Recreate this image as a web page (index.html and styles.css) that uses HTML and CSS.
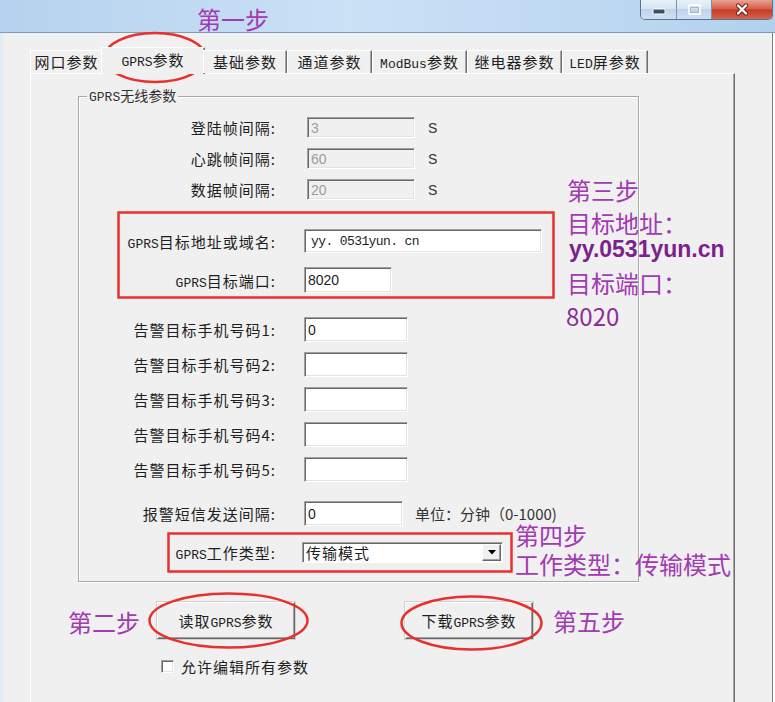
FILE: index.html
```html
<!DOCTYPE html>
<html lang="zh-CN">
<head>
    <meta charset="UTF-8">
    <meta name="viewport" content="width=device-width, initial-scale=1.0">
    <title>GPRS参数设置</title>
    <link rel="stylesheet" href="styles.css">
</head>
<body>
    <div class="titlebar">
        <div class="caption">
            <span class="cap-btn min">
                <svg width="14" height="7" viewBox="0 0 14 7"><rect x="1" y="1" width="12" height="5" rx="1.5" fill="#3a4e66" stroke="#fff"/></svg>
            </span>
            <span class="cap-btn max">
                <svg width="13" height="11" viewBox="0 0 13 11"><rect x="1" y="1" width="11" height="9" fill="none" stroke="#fff" stroke-width="1.6"/><rect x="2.5" y="3.5" width="8" height="5" fill="none" stroke="#a3b5ca"/></svg>
            </span>
            <span class="cap-btn close">
                <svg width="16" height="13" viewBox="0 0 16 13"><path d="M4 2.5 L12 10.5 M12 2.5 L4 10.5" stroke="#6b2016" stroke-width="4.2" stroke-linecap="round"/><path d="M4 2.5 L12 10.5 M12 2.5 L4 10.5" stroke="#fff" stroke-width="2.4" stroke-linecap="round"/></svg>
            </span>
        </div>
    </div>

    <div class="client">
        <div class="tabs">
            <div class="tab t1">网口参数</div>
            <div class="tab t2 active"><span class="en">GPRS</span>参数</div>
            <div class="tab t3">基础参数</div>
            <div class="tab t4">通道参数</div>
            <div class="tab t5"><span class="en">ModBus</span>参数</div>
            <div class="tab t6">继电器参数</div>
            <div class="tab t7"><span class="en">LED</span>屏参数</div>
        </div>

        <div class="panel">
            <fieldset class="group">
                <legend><span class="en">GPRS</span>无线参数</legend>

                <div class="sec intervals">
                    <div class="row">
                        <label>登陆帧间隔:</label>
                        <input class="field off short" value="3" readonly>
                        <span class="unit">S</span>
                    </div>
                    <div class="row">
                        <label>心跳帧间隔:</label>
                        <input class="field off short" value="60" readonly>
                        <span class="unit">S</span>
                    </div>
                    <div class="row">
                        <label>数据帧间隔:</label>
                        <input class="field off short" value="20" readonly>
                        <span class="unit">S</span>
                    </div>
                </div>

                <div class="sec target">
                    <div class="row">
                        <label><span class="en">GPRS</span>目标地址或域名:</label>
                        <input class="field addr" value="yy. 0531yun. cn">
                    </div>
                    <div class="row">
                        <label><span class="en">GPRS</span>目标端口:</label>
                        <input class="field port" value="8020">
                    </div>
                </div>

                <div class="sec phones">
                    <div class="row">
                        <label>告警目标手机号码1:</label>
                        <input class="field phone" value="0">
                    </div>
                    <div class="row">
                        <label>告警目标手机号码2:</label>
                        <input class="field phone" value="">
                    </div>
                    <div class="row">
                        <label>告警目标手机号码3:</label>
                        <input class="field phone" value="">
                    </div>
                    <div class="row">
                        <label>告警目标手机号码4:</label>
                        <input class="field phone" value="">
                    </div>
                    <div class="row">
                        <label>告警目标手机号码5:</label>
                        <input class="field phone" value="">
                    </div>
                </div>

                <div class="sec sms">
                    <div class="row">
                        <label>报警短信发送间隔:</label>
                        <input class="field mins" value="0">
                        <span class="hint">单位：分钟（0-1000)</span>
                    </div>
                </div>

                <div class="sec mode">
                    <div class="row">
                        <label><span class="en">GPRS</span>工作类型:</label>
                        <div class="combo">
                            <span class="val">传输模式</span>
                            <span class="drop"><svg width="8" height="5" viewBox="0 0 8 5"><path d="M0 0 H8 L4 4.5 Z" fill="#000"/></svg></span>
                        </div>
                    </div>
                </div>
            </fieldset>

            <div class="actions">
                <button class="btn read">读取<span class="en">GPRS</span>参数</button>
                <button class="btn load">下载<span class="en">GPRS</span>参数</button>
            </div>

            <div class="check">
                <span class="box"></span>
                <span>允许编辑所有参数</span>
            </div>
        </div>
    </div>

    <!-- 标注 -->
    <svg class="marks" width="775" height="702" viewBox="0 0 775 702">
        <g fill="none" stroke="#e8312c" stroke-width="2.5">
            <ellipse cx="155" cy="57.5" rx="50.5" ry="24.5"/>
            <ellipse cx="228.5" cy="620.5" rx="79" ry="27"/>
            <ellipse cx="471.5" cy="623" rx="70" ry="26.5"/>
            <rect x="118.5" y="212.5" width="435" height="85"/>
            <rect x="168.5" y="533.5" width="343" height="38"/>
        </g>
    </svg>

    <div class="note n1">第一步</div>
    <div class="note n2">第二步</div>
    <div class="note n3">
        <div>第三步</div>
        <div>目标地址：</div>
        <div class="url">yy.0531yun.cn</div>
        <div>目标端口：</div>
        <div class="num">8020</div>
    </div>
    <div class="note n4">
        <div>第四步</div>
        <div>工作类型：传输模式</div>
    </div>
    <div class="note n5">第五步</div>
</body>
</html>
```

FILE: styles.css
```css
* {
    box-sizing: border-box;
}
body {
    margin: 0;
    width: 775px;
    height: 702px;
    overflow: hidden;
    position: relative;
    background: #fff;
    font-family: "Noto Sans CJK SC", sans-serif;
    font-size: 15px;
    color: #1e1e1e;
}
.en {
    font-family: "Liberation Mono", monospace;
    font-size: 13px;
    letter-spacing: 0;
}

/* 标题栏 */
.titlebar {
    height: 33px;
    background: linear-gradient(to right, #b5d2ee, #cbe1f6 45%, #bfd9f2 75%, #b2d0ee);
    border-bottom: 1px solid #8599b0;
    display: flex;
    justify-content: flex-end;
    align-items: flex-start;
    padding-right: 2px;
}
.caption {
    display: flex;
    height: 20px;
    border: 1px solid #5c7290;
    border-top: none;
    border-radius: 0 0 5px 5px;
    overflow: hidden;
}
.cap-btn {
    display: flex;
    align-items: center;
    justify-content: center;
    background: linear-gradient(#e9f1fa, #d6e4f3 45%, #bfd3ea 50%, #cfe0f2);
    border-right: 1px solid #7d93ad;
}
.cap-btn.min {
    width: 36px;
    align-items: flex-end;
    padding-bottom: 4px;
}
.cap-btn.max {
    width: 35px;
}
.cap-btn.close {
    width: 60px;
    border-right: none;
    background: linear-gradient(#e9a392, #d7604a 45%, #c53a26 52%, #d4644a);
}

/* 客户区 */
.client {
    width: 773px;
    height: 669px;
    background: #f0f0f0;
    border-left: 3px solid #e1ebf5;
    border-right: 1px solid #7c7c7c;
    padding: 14px 0 0 27px;
}
.tabs {
    display: flex;
    align-items: flex-end;
    height: 26px;
    position: relative;
    z-index: 1;
}
.tab {
    height: 23px;
    line-height: 21px;
    text-align: center;
    white-space: nowrap;
    letter-spacing: 1px;
    background: #f0f0f0;
    border-top: 1px solid #fff;
    border-left: 1px solid #fff;
    border-right: 1px solid #6e6e6e;
    box-shadow: inset -1px 0 0 #a6a6a6;
}
.tab.active {
    height: 27px;
    line-height: 24px;
    margin: 0 -2px -1px;
}
.t1 { width: 73px; }
.t2 { width: 104px; }
.t3 { width: 84px; }
.t4 { width: 85px; }
.t5 { width: 95px; }
.t6 { width: 95px; }
.t7 { width: 86px; }

.panel {
    width: 705px;
    height: 629px;
    border-top: 1px solid #fff;
    border-left: 1px solid #fff;
    border-right: 1px solid #6e6e6e;
    box-shadow: inset -1px 0 0 #a6a6a6;
    padding: 13px 0 0 47px;
}

/* 分组框 */
.group {
    margin: 0;
    padding: 0;
    min-width: 0;
    width: 561px;
    height: 495px;
    border: 1px solid #a9a9a9;
    box-shadow: 1px 1px 0 #fff, inset 1px 1px 0 #fff;
}
.group legend {
    margin-left: 8px;
    padding: 0 2px;
    font-size: 14px;
    line-height: 16px;
    color: #303030;
}
.sec {
    display: flex;
    flex-direction: column;
    gap: 10px;
}
.row {
    display: flex;
    align-items: center;
}
.row label {
    width: 197px;
    text-align: right;
    letter-spacing: 1px;
    white-space: nowrap;
}
.intervals {
    margin-top: 11px;
}
.intervals .row {
    height: 21px;
}
.target {
    margin-top: 29px;
    gap: 14px;
}
.target .row:first-child {
    height: 24px;
}
.target .row:last-child {
    height: 26px;
}
.phones {
    margin-top: 24px;
}
.phones .row,
.sms .row {
    height: 25px;
}
.sms {
    margin-top: 19px;
}
.mode {
    margin-top: 16px;
}
.mode .row {
    height: 21px;
}

.field {
    height: 100%;
    margin: 0 0 0 28px;
    padding: 0 3px;
    border: 1px solid;
    border-color: #a0a0a0 #fff #fff #a0a0a0;
    box-shadow: inset 1px 1px 0 #696969, inset -1px -1px 0 #e3e3e3;
    background: #fff;
    font-family: "Liberation Sans", sans-serif;
    font-size: 14px;
    color: #1e1e1e;
    outline: none;
}
.field.off {
    background: #f0f0f0;
    color: #9d9d9d;
}
.short {
    width: 108px;
    margin-left: 31px;
}
.addr {
    width: 238px;
    font-family: "Liberation Mono", monospace;
    font-size: 13px;
    letter-spacing: -0.6px;
    padding-left: 6px;
}
.port {
    width: 88px;
}
.phone {
    width: 104px;
}
.mins {
    width: 99px;
}
.unit {
    margin-left: 13px;
    font-family: "Liberation Sans", sans-serif;
    font-size: 14px;
    color: #333;
}
.hint {
    margin-left: 12px;
    font-size: 15px;
    color: #333;
}

.combo {
    display: flex;
    width: 201px;
    height: 100%;
    margin-left: 26px;
    border: 1px solid;
    border-color: #a0a0a0 #fff #fff #a0a0a0;
    box-shadow: inset 1px 1px 0 #696969;
    background: #fff;
}
.combo .val {
    flex: 1;
    padding: 1px 0 0 3px;
    line-height: 18px;
    letter-spacing: 1px;
}
.combo .drop {
    width: 19px;
    margin: 1px 1px 1px 0;
    display: flex;
    align-items: center;
    justify-content: center;
    background: #f0f0f0;
    border: 1px solid;
    border-color: #fff #696969 #696969 #fff;
    box-shadow: inset -1px -1px 0 #a0a0a0;
}

/* 按钮 */
.actions {
    display: flex;
    margin: 20px 0 0 79px;
    gap: 110px;
}
.btn {
    height: 37px;
    padding: 0;
    background: #f0f0f0;
    border: 1px solid;
    border-color: #fff #696969 #696969 #fff;
    box-shadow: inset -1px -1px 0 #a0a0a0, 0 0 0 1px #d0d0d0;
    font-family: "Noto Sans CJK SC", sans-serif;
    font-size: 15px;
    letter-spacing: 1px;
    color: #1e1e1e;
}
.btn.read {
    width: 138px;
}
.btn.load {
    width: 128px;
}
.check {
    display: flex;
    align-items: center;
    gap: 7px;
    margin: 17px 0 0 83px;
    letter-spacing: 1px;
}
.check .box {
    width: 13px;
    height: 13px;
    background: #fff;
    border: 1px solid;
    border-color: #a0a0a0 #fff #fff #a0a0a0;
    box-shadow: inset 1px 1px 0 #696969, inset -1px -1px 0 #e3e3e3;
}

/* 标注层 */
.marks {
    position: absolute;
    left: 0;
    top: 0;
    pointer-events: none;
}
.note {
    position: absolute;
    font-size: 24px;
    line-height: 24px;
    color: #a23ab2;
    white-space: nowrap;
}
.n1 { left: 197px; top: 7px; }
.n2 { left: 68px; top: 610px; }
.n3 { left: 567px; top: 178px; }
.n4 { left: 515px; top: 523px; }
.n5 { left: 553px; top: 609px; }
.n3 div + div {
    margin-top: 9px;
}
.n3 .url {
    margin-top: 1.5px;
    margin-left: 2px;
    font-family: "Liberation Sans", sans-serif;
    font-weight: 700;
    font-size: 23px;
    color: #7d1f8c;
}
.n3 .url + div {
    margin-top: 10px;
}
.n3 .num {
    margin-left: -1px;
    color: #8c2d9c;
}
.n4 div + div {
    margin-top: 5px;
}
```
